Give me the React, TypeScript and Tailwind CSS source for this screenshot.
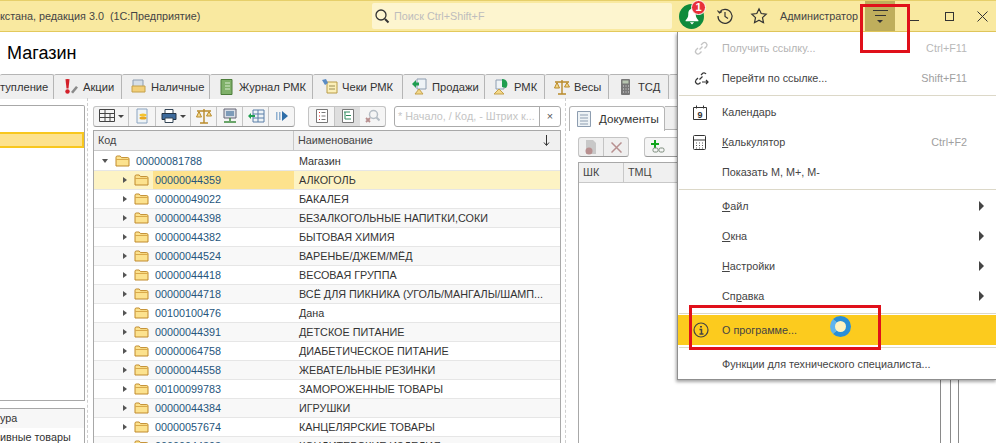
import React from "react";

const font = "font-['Liberation_Sans',Arial,sans-serif]";

const rows = [
  ["00000044359", "АЛКОГОЛЬ"],
  ["00000049022", "БАКАЛЕЯ"],
  ["00000044398", "БЕЗАЛКОГОЛЬНЫЕ НАПИТКИ,СОКИ"],
  ["00000044382", "БЫТОВАЯ ХИМИЯ"],
  ["00000044524", "ВАРЕНЬЕ/ДЖЕМ/МЁД"],
  ["00000044418", "ВЕСОВАЯ ГРУППА"],
  ["00000044718", "ВСЁ ДЛЯ ПИКНИКА (УГОЛЬ/МАНГАЛЫ/ШАМП..."],
  ["00100100476", "Дана"],
  ["00000044391", "ДЕТСКОЕ ПИТАНИЕ"],
  ["00000064758", "ДИАБЕТИЧЕСКОЕ ПИТАНИЕ"],
  ["00000044558", "ЖЕВАТЕЛЬНЫЕ РЕЗИНКИ"],
  ["00100099783", "ЗАМОРОЖЕННЫЕ ТОВАРЫ"],
  ["00000044384", "ИГРУШКИ"],
  ["00000057674", "КАНЦЕЛЯРСКИЕ ТОВАРЫ"],
  ["00000044393", "КОНДИТЕРСКИЕ ИЗДЕЛИЯ"],
];

const Folder = () => (
  <svg width="15" height="12" viewBox="0 0 15 12" className="shrink-0">
    <path d="M1 11V2.200C1 1.500 1.500 1 2.200 1h3l1.300 1.600h6.300c.7 0 1.200.5 1.200 1.200V11z" fill="#fce28e" stroke="#c08a2c" />
    <path d="M1 4.500h13" stroke="#d9a94a" />
  </svg>
);

const Tab = ({ w, label, icon }: { w: string; label: string; icon?: React.ReactNode }) => (
  <div className={`${w} h-[25px] flex items-center shrink-0 bg-[#efefef] border border-b-0 border-[#b5b5b5] border-l-0 rounded-t-[2px] gap-[3px] text-[#333] text-[11.2px] ${icon ? "pl-[8px]" : ""}`}>
    {icon}
    <span className="whitespace-nowrap">{label}</span>
  </div>
);

const Ic = ({ children }: { children: React.ReactNode }) => (
  <svg width="18" height="18" viewBox="0 0 18 18" className="shrink-0">{children}</svg>
);

const Scale = () => (
  <Ic>
    <path d="M9 2v14M5 16h8M2 4h14" stroke="#b98a2a" strokeWidth="1.400" fill="none" />
    <path d="M1.500 10 4 4.500 6.500 10zM11.500 9 14 4.500 16.500 9z" fill="#f4d98a" stroke="#b98a2a" />
  </Ic>
);

const ToolBtn = ({ w, children, arrow }: { w: string; children?: React.ReactNode; arrow?: boolean }) => (
  <div className={`${w} h-full flex items-center justify-center gap-[3px] border-r border-[#c4c4c4] last:border-r-0`}>
    {children}
    {arrow && <span className="w-0 h-0 border-x-[3px] border-x-transparent border-t-[3px] border-t-[#444]" />}
  </div>
);

const MenuItem = ({ label, short, icon, arrow, muted, hot }: { label: React.ReactNode; short?: string; icon?: React.ReactNode; arrow?: boolean; muted?: boolean; hot?: boolean }) => (
  <div className={`h-[30px] flex items-center pl-[15px] pr-[13px] ${hot ? "bg-[#fccb1e]" : ""} ${muted ? "text-[#b4b4b4]" : "text-[#444]"}`}>
    <div className="w-[29px] flex items-center shrink-0">{icon}</div>
    <span className="whitespace-nowrap">{label}</span>
    {short && <span className={`ml-auto pr-[17px] ${muted ? "text-[#b8b8b8]" : "text-[#a0a0a0]"}`}>{short}</span>}
    {arrow && <span className="ml-auto w-0 h-0 border-y-[5px] border-y-transparent border-l-[5px] border-l-[#444]" />}
  </div>
);

const Sep = () => <div className="h-px bg-[#dcd8c8] mx-[1px] my-[1.5px]" />;

export default function App() {
  return (
    <div className={`${font} relative w-[996px] h-[443px] overflow-hidden bg-white text-[10.8px] text-[#333]`}>
      {/* title bar */}
      <header className="h-[32px] flex items-center bg-[#f9e9a0] border-t border-[#e6cf6a] border-b border-b-[#e3c95c]">
        <span className="w-[372px] shrink-0 text-[#444] whitespace-nowrap">кстана, редакция 3.0&nbsp; (1С:Предприятие)</span>
        <div className="w-[300px] h-[26px] shrink-0 flex items-center gap-[4px] pl-[2px] bg-[#fdf5cf] rounded-[2px] text-[#bdbdbd]">
          <svg width="16" height="16" viewBox="0 0 16 16" fill="none" stroke="#333" strokeWidth="1.300"><circle cx="7" cy="7" r="5" /><path d="M11 11l3.500 3.500" strokeWidth="2" /></svg>
          Поиск Ctrl+Shift+F
        </div>
        <div className="relative w-[25px] h-[25px] ml-[7px] shrink-0 rounded-full bg-[#0f8a3c] flex items-center justify-center">
          <svg width="16" height="17" viewBox="0 0 15 16"><path d="M7.500 1C4.500 1 4 3.500 4 6c0 3-1.500 4-2.500 5.500v1h12v-1C12.500 10 11 9 11 6c0-2.500-.5-5-3.500-5zM5.500 13.500h4L7.500 15.500z" fill="#fff" /></svg>
          <span className="absolute -top-[4px] -right-[2px] w-[15px] h-[15px] rounded-full bg-[#e8303a] border border-white text-white font-bold text-[11px] leading-[13px] text-center">1</span>
        </div>
        <svg width="18" height="18" viewBox="0 0 18 18" fill="none" stroke="#333" strokeWidth="1.200" className="ml-[12px] shrink-0"><path d="M3.500 5A7 7 0 1 1 2 9" /><path d="M1.500 3.500 3.500 6 6 4.500" /><path d="M9 5v4.500l3 2" /></svg>
        <svg width="18" height="18" viewBox="0 0 18 18" fill="none" stroke="#333" strokeWidth="1.200" className="ml-[16px] shrink-0"><path d="M9 1.800l2.200 4.700 5 .6-3.700 3.500 1 5.100L9 13.200l-4.500 2.500 1-5.100L1.800 7.100l5-.6z" /></svg>
        <span className="ml-[12px] w-[85px] shrink-0 text-[#444] whitespace-nowrap">Администратор</span>
        <div className="w-[30px] h-full shrink-0 bg-[#bfae5c] flex flex-col items-center pt-[9px]">
          <div className="w-[15px] h-px bg-[#333]" />
          <div className="w-[11px] h-px bg-[#333] mt-[4px]" />
          <div className="w-0 h-0 mt-[4px] border-x-[3px] border-x-transparent border-t-[3px] border-t-[#333]" />
        </div>
        <div className="w-[9px] h-px bg-[#333] ml-[15px] mt-[9px] shrink-0" />
        <div className="w-[9px] h-[9px] border border-[#333] ml-[26px] shrink-0" />
        <svg width="11" height="11" viewBox="0 0 11 11" stroke="#333" className="ml-[23px] shrink-0"><path d="M.5.500l10 10M10.500.500l-10 10" /></svg>
      </header>

      {/* page title */}
      <div className="h-[42px] pl-[7px] pt-[10px] text-[18px] leading-[22px] text-black">Магазин</div>

      {/* tabs */}
      <div className="flex h-[25px] border-b border-[#b5b5b5] -mb-px">
        <Tab w="w-[54px]" label="тупление" />
        <Tab w="w-[68px]" label="Акции" icon={<Ic><path d="M3.500 1.500C3.500.8 7.500.8 7.500 1.500L6.500 10.500h-2z" fill="#d3202a" /><circle cx="5.500" cy="13.500" r="2.200" fill="#d3202a" /><path d="M9 14l5-6 2 1.500-5 6z" fill="#8a8a8a" /></Ic>} />
        <Tab w="w-[88px]" label="Наличные" icon={<Ic><path d="M3 2h10v8H3z" fill="#d6dfe8" stroke="#8d9db0" /><path d="M2 8h13v6H2z" fill="#f2cf79" stroke="#c4a04a" /></Ic>} />
        <Tab w="w-[103px]" label="Журнал РМК" icon={<Ic><path d="M3 1.500h11v15H3z" fill="#7fb069" stroke="#4c7d3a" /><path d="M7 5h5M7 8h5M7 11h5" stroke="#d9ecd0" /></Ic>} />
        <Tab w="w-[90px]" label="Чеки РМК" icon={<Ic><path d="M6 4h10v11H6z" fill="#fbefb8" stroke="#b89b46" /><path d="M8 8h6M8 11h6" stroke="#9a8c55" /><path d="M1 2l4-1 2 4-3 2z" fill="#5b8cc4" /></Ic>} />
        <Tab w="w-[82px]" label="Продажи" icon={<Ic><path d="M6 1h9v10H6z" fill="#eef3f6" stroke="#8d9db0" /><path d="M1 6l4-4v2.500h3v3H5V10z" fill="#1f9e50" /><path d="M8 11l4 5H4z" fill="#f4d98a" stroke="#c4a04a" /></Ic>} />
        <Tab w="w-[60px]" label="РМК" icon={<Ic><path d="M3 2h8v9H3z" fill="#eef3f6" stroke="#8d9db0" /><path d="M9 1c5 0 7 5 4 9l-4-1z" fill="#1f9e50" /><path d="M6 11l5 5H1z" fill="#f4d98a" stroke="#c4a04a" /></Ic>} />
        <Tab w="w-[64px]" label="Весы" icon={<Scale />} />
        <Tab w="w-[60px]" label="ТСД" icon={<Ic><rect x="4" y="1" width="9" height="16" fill="#777" rx="1" /><rect x="5.500" y="2.500" width="6" height="3" fill="#b7c5b0" /><path d="M6 8h1M8.500 8h1M11 8h1M6 11h1M8.500 11h1M11 11h1M6 14h1M8.500 14h1M11 14h1" stroke="#ddd" /></Ic>} />
        <Tab w="w-[70px]" label="" />
      </div>

      {/* work area */}
      <div className="flex h-[345px]">
        {/* left filters */}
        <aside className="w-[88px] shrink-0 flex flex-col pt-[7px] pr-[2px] border-r border-dashed border-[#cfcfcf]">
          <div className="h-[296px] shrink-0 border border-l-0 border-[#a8a8a8] rounded-tr-[2px] pt-[26px]">
            <div className="h-[16px] bg-[#fde28d] border-2 border-l-0 border-[#f8c71e]" />
          </div>
          <div className="flex-1 mt-[7px] border border-l-0 border-[#a8a8a8]">
            <div className="h-[19px] bg-[#f7f7f7] leading-[19px]">ура</div>
            <div className="h-[19px] leading-[19px] whitespace-nowrap">ивные товары</div>
          </div>
        </aside>

        {/* catalogue */}
        <section className="w-[478px] shrink-0 pl-[5px] pr-[4px] pt-[8px] border-r border-dashed border-[#cfcfcf]">
          <div className="h-[20px] flex items-center">
            <div className="w-[202px] h-[21px] flex items-center bg-[#f5f5f5] border border-[#c4c4c4] border-b-[#9a9a9a] rounded-[3px]">
              <ToolBtn w="w-[35px]" arrow><svg width="16" height="14" viewBox="0 0 16 14" fill="none" stroke="#444"><path d="M.5.500h15v12H.5zM.5 4.500h15M.5 8.500h15M6 .500v12M11 4.500v8" /></svg></ToolBtn>
              <ToolBtn w="w-[27px]"><Ic><path d="M4 2h10v14H4z" fill="#eef3f6" stroke="#8ba4c0" /><ellipse cx="10" cy="8" rx="3.500" ry="1.500" fill="#f4c430" /><ellipse cx="10" cy="11" rx="3.500" ry="1.500" fill="#e8a820" /></Ic></ToolBtn>
              <ToolBtn w="w-[35px]" arrow><svg width="16" height="14" viewBox="0 0 16 14"><path d="M4 .500h8v4H4z" fill="#fff" stroke="#345" /><path d="M1 4.500h14v6H1z" fill="#3c6a9c" stroke="#234" /><path d="M4 9h8v4.500H4z" fill="#fff" stroke="#345" /></svg></ToolBtn>
              <ToolBtn w="w-[26px]"><Scale /></ToolBtn>
              <ToolBtn w="w-[26px]"><Ic><path d="M3 2h12v9H3z" fill="#d9dee6" stroke="#667" /><path d="M5 4h8v5H5z" fill="#7d9bb8" /><path d="M9 11v3M3 15h12" stroke="#3c8a3c" strokeWidth="1.500" /></Ic></ToolBtn>
              <ToolBtn w="w-[26px]"><Ic><path d="M6 3h11v12H6z" fill="#eef3f6" stroke="#5a7fa8" /><path d="M6 7h11M6 11h11M11 3v12" stroke="#5a7fa8" /><path d="M1 9l3-3v2h4v2H4v2z" fill="#1f9e50" /></Ic></ToolBtn>
              <ToolBtn w="w-[25px]"><svg width="12" height="10" viewBox="0 0 12 10"><path d="M0 1h1.500v8H0zM3 1h1.500v8H3z" fill="#8fb0d0" /><path d="M6 0l6 5-6 5z" fill="#2f6ea8" /></svg></ToolBtn>
            </div>
            <div className="ml-[13px] w-[78px] h-[21px] flex items-center bg-[#f5f5f5] border border-[#c4c4c4] border-b-[#9a9a9a] rounded-[3px]">
              <ToolBtn w="w-[26px]"><svg width="12" height="14" viewBox="0 0 12 14" fill="#fff" stroke="#777"><path d="M.5.500h11v13H.5z" /><path d="M3 3.500h1M3 7h1M3 10.500h1" stroke="#d33" /><path d="M5.500 3.500h4M5.500 7h4M5.500 10.500h4" /></svg></ToolBtn>
              <div className="w-[25px] h-full bg-[#dedede] flex items-center justify-center"><svg width="12" height="14" viewBox="0 0 12 14" fill="#fff" stroke="#777"><path d="M.5.500h11v13H.5z" /><path d="M2 3h6M4 6.500h5M4 10h5M3 3v7h1" stroke="#2c8a5c" /></svg></div>
              <div className="flex-1 flex items-center justify-center"><svg width="15" height="15" viewBox="0 0 15 15" fill="none"><circle cx="8.500" cy="5.500" r="4" stroke="#b5bdc5" strokeWidth="1.500" /><path d="M11.500 8.500l3 3" stroke="#b5bdc5" strokeWidth="2" /><path d="M1 9l4 4M5 9l-4 4" stroke="#b88f8f" strokeWidth="1.800" /></svg></div>
            </div>
            <div className="ml-[8px] flex-1 h-[21px] flex items-center border border-[#ababab] rounded-[3px] text-[#c4c4c4] whitespace-nowrap overflow-hidden pl-[3px]">
              <span className="flex-1">* Начало, / Код, - Штрих к...</span>
              <span className="w-[21px] h-full border-l border-[#ababab] text-[#555] flex items-center justify-center">×</span>
            </div>
          </div>

          <div className="mt-[4px] border border-[#a8a8a8] border-b-0">
            <div className="h-[20px] flex bg-[#f0f0f0] border-b border-[#c8c8c8] text-[#444]">
              <div className="w-[200px] pl-[4px] leading-[19px] border-r border-[#c8c8c8]">Код</div>
              <div className="flex-1 pl-[4px] pr-[10px] leading-[19px] flex justify-between items-center">Наименование
                <svg width="7" height="11" viewBox="0 0 7 11" fill="none" stroke="#333"><path d="M3.500 0v10M1 7.500l2.500 3 2.500-3" /></svg>
              </div>
            </div>
            <div className="h-[19px] flex items-center border-b border-[#e6e6e6] mt-px">
              <div className="w-[200px] flex items-center pl-[8px] shrink-0">
                <span className="w-0 h-0 border-x-[3px] border-x-transparent border-t-[4px] border-t-[#555]" />
                <span className="ml-[7px]"><Folder /></span>
                <span className="ml-[6px] text-[#25557c]">00000081788</span>
              </div>
              <span className="pl-[5px]">Магазин</span>
            </div>
            {rows.map(([code, name], i) => (
              <div key={code} className={`h-[19px] flex items-center border-b border-[#e6e6e6] ${i === 0 ? "bg-[#fdf3c4]" : i % 2 === 0 ? "bg-[#f8f8f8]" : ""}`}>
                <div className="w-[200px] h-full flex items-center pl-[29px] shrink-0">
                  <span className="w-0 h-0 border-y-[3px] border-y-transparent border-l-[4px] border-l-[#555]" />
                  <span className="ml-[7px]"><Folder /></span>
                  <span className={`ml-[4px] pl-[2px] h-full flex-1 leading-[18px] text-[#25557c] ${i === 0 ? "bg-[#fde28d]" : ""}`}>{code}</span>
                </div>
                <span className="pl-[5px] whitespace-nowrap">{name}</span>
              </div>
            ))}
          </div>
        </section>

        {/* documents panel */}
        <section className="flex-1 pl-[3px] pt-[8px]">
          <div className="h-[24px] flex border-b border-[#b5b5b5]">
            <div className="w-[96px] h-[25px] flex items-center gap-[8px] pl-[7px] border border-b-0 border-[#b5b5b5] rounded-t-[3px] bg-white text-[11.6px] shrink-0">
              <svg width="14" height="16" viewBox="0 0 14 16" fill="#eef3f6" stroke="#8d9db0"><path d="M.5.500h13v15H.5z" /><path d="M3 4h8M3 7h8M3 10h8M3 13h8" /></svg>
              Документы
            </div>
            <div className="w-[20px] bg-[#efefef] border-r border-t border-[#b5b5b5]" />
          </div>
          <div className="flex h-[20px] mt-[7px] ml-[9px] gap-[15px]">
            <div className="w-[51px] flex items-center bg-[#efefef] border border-[#c4c4c4] border-b-[#9a9a9a] rounded-[3px]">
              <ToolBtn w="w-[26px]"><svg width="14" height="16" viewBox="0 0 14 16"><path d="M2 1h7l3 3v11H2z" fill="#c8c8c8" /><circle cx="5" cy="12" r="3.500" fill="#b89090" /></svg></ToolBtn>
              <ToolBtn w="w-[24px]"><svg width="11" height="11" viewBox="0 0 11 11" stroke="#b89090" strokeWidth="1.500"><path d="M.5.500l10 10M10.500.500l-10 10" /></svg></ToolBtn>
            </div>
            <div className="w-[50px] flex items-center bg-[#f5f5f5] border border-[#c4c4c4] border-b-[#9a9a9a] rounded-[3px]">
              <ToolBtn w="w-[26px]"><svg width="16" height="14" viewBox="0 0 16 14"><path d="M4 0h2v3h3v2H6v3H4V5H1V3h3z" fill="#12a51e" /><rect x="3" y="8" width="5" height="4" rx="1.500" fill="none" stroke="#7a8a7a" /><rect x="9" y="8" width="5" height="4" rx="1.500" fill="none" stroke="#7a8a7a" /></svg></ToolBtn>
            </div>
          </div>
          <div className="h-[300px] mt-[5px] ml-[9px] border border-[#a8a8a8] border-r-0 flex flex-col">
            <div className="h-[20px] shrink-0 flex bg-[#f0f0f0] border-b border-[#c8c8c8] text-[#444] leading-[19px]">
              <div className="w-[45px] pl-[4px] border-r border-[#c8c8c8]">ШК</div>
              <div className="w-[317px] pl-[4px] border-r border-[#c8c8c8]">ТМЦ</div>
            </div>
            <div className="flex-1 flex">
              <div className="w-[362px] border-r border-[#8a8a8a]" />
              <div className="w-[10px] border-r border-[#8a8a8a]" />
              <div className="w-[8px] border-r border-[#8a8a8a]" />
            </div>
          </div>
        </section>
      </div>

      {/* open menu */}
      <div className="absolute left-[677px] top-[32px] w-[320px] h-[348px] bg-white border-l border-b border-[#8f8f8f] shadow-[-1px_2px_3px_rgba(0,0,0,0.35)] pt-[1px]">
        <MenuItem muted label="Получить ссылку..." short="Ctrl+F11" icon={<svg width="16" height="16" viewBox="0 0 16 16" fill="none" stroke="#c4c4c4" strokeWidth="1.300"><path d="M6.500 9.500l3-3M5 8l-2 2a2.500 2.500 0 0 0 3.500 3.500l2-2M8 5l2-2a2.500 2.500 0 0 1 3.500 3.500l-2 2" /></svg>} />
        <MenuItem label="Перейти по ссылке..." short="Shift+F11" icon={<svg width="16" height="16" viewBox="0 0 16 16" fill="none" stroke="#333" strokeWidth="1.200"><path d="M5 8l-2 2a2.500 2.500 0 0 0 3.500 3.500l1-1M8 5l2-2a2.500 2.500 0 0 1 3 1M6.500 9.500l3-3M9 12h6M13 10l2 2-2 2" /></svg>} />
        <Sep />
        <MenuItem label="Календарь" icon={<svg width="14" height="15" viewBox="0 0 14 15" fill="none" stroke="#333"><path d="M.5 2.500h13v12H.5zM3.500.500v3M10.500.500v3" /><text x="7" y="12.500" textAnchor="middle" fontSize="9" fontWeight="700" fill="#333" stroke="none">9</text></svg>} />
        <MenuItem label={<><u>К</u>алькулятор</>} short="Ctrl+F2" icon={<svg width="13" height="15" viewBox="0 0 13 15" fill="none" stroke="#333"><rect x=".5" y=".5" width="12" height="14" rx="1" /><path d="M.5 5h12" /><path d="M3 8h1M6 8h1M9 8h1M3 10.500h1M6 10.500h1M9 10.500h1M3 13h1M6 13h1M9 13h1" strokeWidth=".8" /></svg>} />
        <MenuItem label="Показать М, М+, М-" />
        <Sep />
        <MenuItem arrow label={<><u>Ф</u>айл</>} />
        <MenuItem arrow label={<><u>О</u>кна</>} />
        <MenuItem arrow label={<><u>Н</u>астройки</>} />
        <MenuItem arrow label={<>Сп<u>р</u>авка</>} />
        <Sep />
        <MenuItem hot label="О программе..." icon={<svg width="16" height="16" viewBox="0 0 16 16" fill="none" stroke="#444" strokeWidth="1.200"><circle cx="8" cy="8" r="7" /><path d="M8 4v1.500" strokeWidth="2" /><path d="M6.500 7.500H8.500V12M6.500 12h4" strokeWidth="1.500" /></svg>} />
        <Sep />
        <MenuItem label="Функции для технического специалиста..." />
      </div>

      {/* mouse cursor highlight */}
      <div className="absolute left-[830px] top-[316px] w-[21px] h-[21px] rounded-full border-[5px] border-[#2a8fd8] border-l-[#5fb4ee] bg-[#fff3c0]" />

      {/* red annotation frames */}
      <div className="absolute left-[860px] top-[4px] w-[50px] h-[49px] border-[3px] border-[#e0101a]" />
      <div className="absolute left-[689px] top-[305px] w-[192px] h-[45px] border-[3px] border-[#e0101a]" />
    </div>
  );
}
